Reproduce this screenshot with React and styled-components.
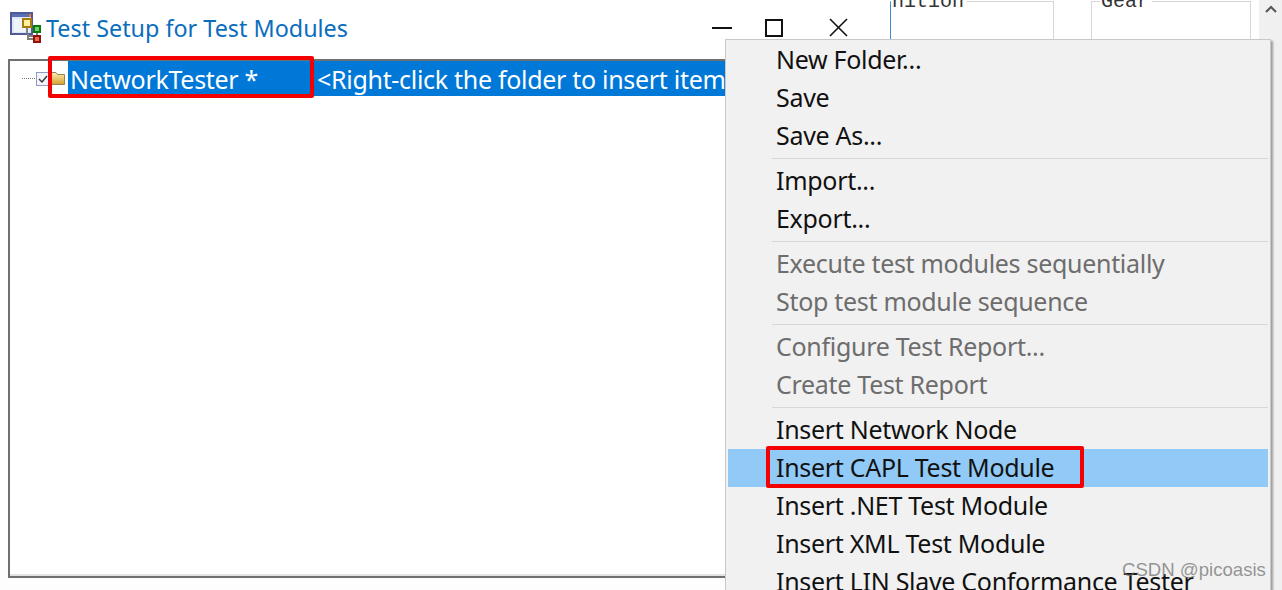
import React from "react";
import styled, { createGlobalStyle } from "styled-components";

const Global = createGlobalStyle`
  html, body { margin: 0; padding: 0; background: #fff; }
  body { font-family: "Noto Sans", "Open Sans", sans-serif; }
`;

const Page = styled.div`
  position: relative;
  width: 1282px;
  height: 590px;
  overflow: hidden;
  display: flex;
  background: #fff;
`;

const Dialog = styled.div`
  width: 876px;
  height: 590px;
  flex: none;
  background: #fdfdfd;
  display: flex;
  flex-direction: column;
  padding-left: 8px;
  box-sizing: border-box;
`;

const TitleBar = styled.div`
  height: 59px;
  flex: none;
  display: flex;
  align-items: center;
  background: #fff;
  margin-left: -8px;
  padding: 0 0 1px 10px;
  box-sizing: border-box;
`;

const IconSlot = styled.span`
  display: flex;
  margin-bottom: 3px;
`;

const Title = styled.span`
  font-size: 23.35px;
  line-height: 30px;
  color: #0a6ebd;
  margin: 0 0 2px 5px;
  white-space: nowrap;
`;

const WindowControls = styled.div`
  margin-left: auto;
  display: flex;
  align-items: center;
  gap: 33px;
  padding: 0 28px 3px 0;
  & > :last-child {
    margin-left: 13px;
  }
`;

const TreeBox = styled.div`
  height: 519px;
  flex: none;
  box-sizing: border-box;
  background: #fff;
  border: 2px solid #6f6f6f;
  border-right: none;
  box-shadow: inset 0 -2px 0 #e3e3e3;
`;

const TreeRow = styled.div`
  display: flex;
  align-items: center;
  height: 35px;
  padding-left: 12px;
`;

const Dots = styled.span`
  width: 13px;
  border-top: 1px dotted #777;
  margin-right: 1px;
`;

const Selection = styled.div`
  flex: 1;
  height: 35px;
  margin-left: 3px;
  background: #0078d7;
  color: #fff;
  font-size: 25px;
  letter-spacing: -0.3px;
  line-height: 36px;
  display: flex;
  white-space: nowrap;
  overflow: hidden;
`;

const NodeName = styled.span`
  width: 249px;
  flex: none;
  padding-left: 2px;
  box-sizing: border-box;
`;

const Hint = styled.span``;

const RightPane = styled.div`
  flex: 1;
  display: flex;
  background: #fff;
`;

const Groups = styled.div`
  flex: 1;
  display: flex;
  padding: 1px 0 0 14px;
  gap: 37px;
`;

const GroupBox = styled.div`
  position: relative;
  width: ${(p) => p.$width}px;
  height: 300px;
  flex: none;
  box-sizing: border-box;
  border: 1px solid #d6d6d6;
  border-left-color: ${(p) => (p.$accent ? "#3b8fd6" : "#d6d6d6")};
`;

const GroupLegend = styled.span`
  position: absolute;
  top: -10px;
  left: ${(p) => p.$left}px;
  padding: 0 3px 0 1px;
  background: #fff;
  font-family: "Liberation Mono", monospace;
  font-size: 20px;
  line-height: 20px;
  color: #333;
`;

const ScrollTrack = styled.div`
  width: 23px;
  flex: none;
  background: #f0f0f0;
  display: flex;
  justify-content: center;
  padding-top: 5px;
  box-sizing: border-box;
`;

const Menu = styled.div`
  position: absolute;
  left: 725px;
  top: 39px;
  width: 546px;
  height: 560px;
  box-sizing: border-box;
  background: #f1f1f1;
  border: 1px solid #c8c8c8;
  box-shadow: 2px 2px 2px rgba(0, 0, 0, 0.35);
  padding: 1px 2px 0;
`;

const MenuRow = styled.div`
  height: 38px;
  line-height: 36px;
  padding-left: 48px;
  font-size: 25px;
  letter-spacing: -0.3px;
  white-space: nowrap;
  color: ${(p) => (p.$disabled ? "#6d6d6d" : "#111")};
  background: ${(p) => (p.$active ? "#91c9f7" : "transparent")};
`;

const MenuDivider = styled.div`
  height: 7px;
  margin-left: 44px;
  display: flex;
  align-items: center;
  &::before {
    content: "";
    flex: 1;
    height: 1px;
    background: #d7d7d7;
  }
`;

const Callout = styled.div`
  position: absolute;
  box-sizing: border-box;
  left: ${(p) => p.$x}px;
  top: ${(p) => p.$y}px;
  width: ${(p) => p.$w}px;
  height: ${(p) => p.$h}px;
  border: 4px solid #f40000;
  border-radius: 2px;
`;

const Watermark = styled.span`
  position: absolute;
  left: 1122px;
  top: 559px;
  font-family: "Liberation Sans", sans-serif;
  font-size: 18.6px;
  line-height: 22px;
  color: rgba(110, 110, 110, 0.72);
  white-space: nowrap;
`;

const AppIcon = () => (
  <svg width="31" height="31" viewBox="0 0 31 31">
    <rect x="1" y="1" width="21" height="21" fill="#dfe6f5" stroke="#4f5a96" strokeWidth="2" />
    <rect x="2" y="2" width="19" height="3" fill="#5a6fb5" />
    <rect x="19" y="2" width="2" height="3" fill="#e87830" />
    <rect x="4" y="7" width="15" height="13" fill="#eef4fc" />
    <path d="M17 14 V22 M27 21 V24 H18 M18 22 V27 H24" stroke="#808080" strokeWidth="2" fill="none" />
    <rect x="13" y="7" width="8" height="8" fill="#fff0a0" stroke="#a87a10" strokeWidth="2" />
    <rect x="24" y="14" width="6" height="6" fill="#6fd06f" stroke="#0a7a0a" strokeWidth="2" />
    <rect x="24" y="24" width="6" height="6" fill="#f06a4a" stroke="#8e1010" strokeWidth="2" />
  </svg>
);

const MinIcon = () => (
  <svg width="20" height="20" viewBox="0 0 20 20">
    <path d="M0 10 H20" stroke="#111" strokeWidth="2" />
  </svg>
);
const MaxIcon = () => (
  <svg width="18" height="18" viewBox="0 0 18 18">
    <rect x="1" y="1" width="16" height="16" fill="none" stroke="#111" strokeWidth="2" />
  </svg>
);
const CloseIcon = () => (
  <svg width="19" height="19" viewBox="0 0 19 19">
    <path d="M1 1 L18 18 M18 1 L1 18" stroke="#111" strokeWidth="1.6" />
  </svg>
);
const CheckIcon = () => (
  <svg width="14" height="14" viewBox="0 0 14 14">
    <rect x="0.5" y="0.5" width="13" height="13" fill="#f2f4fa" stroke="#8f9bc4" />
    <path d="M3 7 L6 10 L11 4" stroke="#333" strokeWidth="1.4" fill="none" />
  </svg>
);
const FolderIcon = () => (
  <svg width="15" height="13" viewBox="0 0 15 13">
    <defs>
      <linearGradient id="fld" x1="0" y1="0" x2="0" y2="1">
        <stop offset="0" stopColor="#fbeeb4" />
        <stop offset="1" stopColor="#d6a030" />
      </linearGradient>
    </defs>
    <path d="M0.5 12.5 V2 L2 0.5 H6 L7.5 2.5 H14.5 V12.5 Z" fill="url(#fld)" stroke="#96864f" />
  </svg>
);
const UpIcon = () => (
  <svg width="12" height="8" viewBox="0 0 12 8">
    <path d="M1 7 L6 2 L11 7" stroke="#555" strokeWidth="2" fill="none" />
  </svg>
);

const menu = [
  ["New Folder..."], ["Save"], ["Save As..."], null,
  ["Import..."], ["Export..."], null,
  ["Execute test modules sequentially", "d"], ["Stop test module sequence", "d"], null,
  ["Configure Test Report...", "d"], ["Create Test Report", "d"], null,
  ["Insert Network Node"], ["Insert CAPL Test Module", "a"], ["Insert .NET Test Module"],
  ["Insert XML Test Module"], ["Insert LIN Slave Conformance Tester"],
];

export default function App() {
  return (
    <Page>
      <Global />
      <Dialog>
        <TitleBar>
          <IconSlot>
            <AppIcon />
          </IconSlot>
          <Title>Test Setup for Test Modules</Title>
          <WindowControls>
            <MinIcon />
            <MaxIcon />
            <CloseIcon />
          </WindowControls>
        </TitleBar>
        <TreeBox>
          <TreeRow>
            <Dots />
            <CheckIcon />
            <FolderIcon />
            <Selection>
              <NodeName>NetworkTester *</NodeName>
              <Hint>&lt;Right-click the folder to insert items&gt;</Hint>
            </Selection>
          </TreeRow>
        </TreeBox>
      </Dialog>
      <RightPane>
        <Groups>
          <GroupBox $width={164} $accent>
            <GroupLegend $left={0}>nition</GroupLegend>
          </GroupBox>
          <GroupBox $width={160}>
            <GroupLegend $left={8}>Gear</GroupLegend>
          </GroupBox>
        </Groups>
        <ScrollTrack>
          <UpIcon />
        </ScrollTrack>
      </RightPane>
      <Menu>
        {menu.map((m, i) =>
          m ? (
            <MenuRow key={i} $disabled={m[1] === "d"} $active={m[1] === "a"}>
              {m[0]}
            </MenuRow>
          ) : (
            <MenuDivider key={i} />
          )
        )}
      </Menu>
      <Callout $x={48} $y={56} $w={266} $h={42} />
      <Callout $x={766} $y={446} $w={318} $h={42} />
      <Watermark>CSDN @picoasis</Watermark>
    </Page>
  );
}
